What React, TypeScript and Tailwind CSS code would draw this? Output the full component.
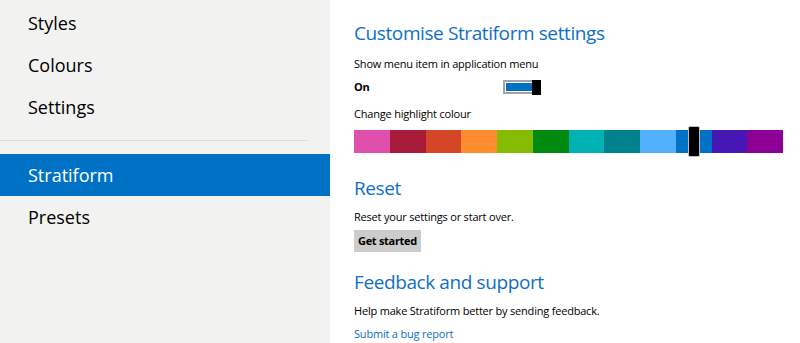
import React from 'react';

const navTop = ['Styles', 'Colours', 'Settings'];

const swatches = [
    '#e14fad',
    '#a91b3a',
    '#d54626',
    '#ff8c2e',
    '#85bb00',
    '#008a0f',
    '#00b2b4',
    '#00818e',
    '#52b0ff',
    '#0072c6',
    '#4617b4',
    '#8c0095',
];

const selected = 9;

const App: React.FC = () => {
    return (
        <div className="flex w-[800px] h-[343px] overflow-hidden bg-white font-['Open_Sans','Noto_Sans',sans-serif] text-black">
            {/* sidebar */}
            <nav className="w-[330px] shrink-0 bg-[#f2f3f1] pt-[2px]">
                {navTop.map((item) => (
                    <div key={item} className="h-[42px] flex items-center pl-[28px] text-[18px]">
                        {item}
                    </div>
                ))}
                <div className="mt-[12px] mb-[13px] w-[307px] h-px bg-[#dedede]" />
                <div className="h-[42px] flex items-center pl-[28px] text-[18px] bg-[#0072c6] text-white">
                    Stratiform
                </div>
                <div className="h-[42px] flex items-center pl-[28px] text-[18px]">Presets</div>
            </nav>

            {/* content */}
            <main className="flex-1 pl-[24px] pt-[20px] text-[11px] tracking-[-0.2px]">
                <h2 className="text-[19px] leading-[26px] tracking-[-0.4px] text-[#0f6fc6]">Customise Stratiform settings</h2>
                <p className="mt-[11px] leading-[14px]">Show menu item in application menu</p>
                <div className="mt-[8px] flex items-center h-[16px]">
                    <span className="w-[149px] font-bold">On</span>
                    <div className="flex h-[14px] w-[38px] border-2 border-[#a3a3a3] p-px bg-white">
                        <div className="flex-1 bg-[#0072c6]" />
                    </div>
                    <div className="-ml-[9px] h-[15px] w-[9px] bg-black" />
                </div>
                <p className="mt-[12px] leading-[14px]">Change highlight colour</p>
                <div className="relative mt-[9px] flex w-[429px] h-[23px]">
                    {swatches.map((c, i) => (
                        <div key={c} className="relative flex-1" style={{ backgroundColor: c }}>
                            {i === selected && (
                                <div className="absolute left-[12px] -top-[4px] w-[12px] h-[31px] bg-black border border-[#bdbdbd] rounded-[2px]" />
                            )}
                        </div>
                    ))}
                </div>

                <h2 className="mt-[22px] text-[19px] leading-[26px] tracking-[-0.4px] text-[#0f6fc6]">Reset</h2>
                <p className="mt-[9px] leading-[14px]">Reset your settings or start over.</p>
                <button className="mt-[6px] h-[22px] px-[4px] bg-[#cccccc] font-bold text-[11px] leading-[22px] tracking-[-0.3px]">
                    Get started
                </button>

                <h2 className="mt-[17px] text-[19px] leading-[26px] tracking-[-0.4px] text-[#0f6fc6]">Feedback and support</h2>
                <p className="mt-[9px] leading-[14px]">Help make Stratiform better by sending feedback.</p>
                <p className="mt-[9px] leading-[14px] text-[#0f6fc6]">Submit a bug report</p>
            </main>
        </div>
    );
};

export default App;
